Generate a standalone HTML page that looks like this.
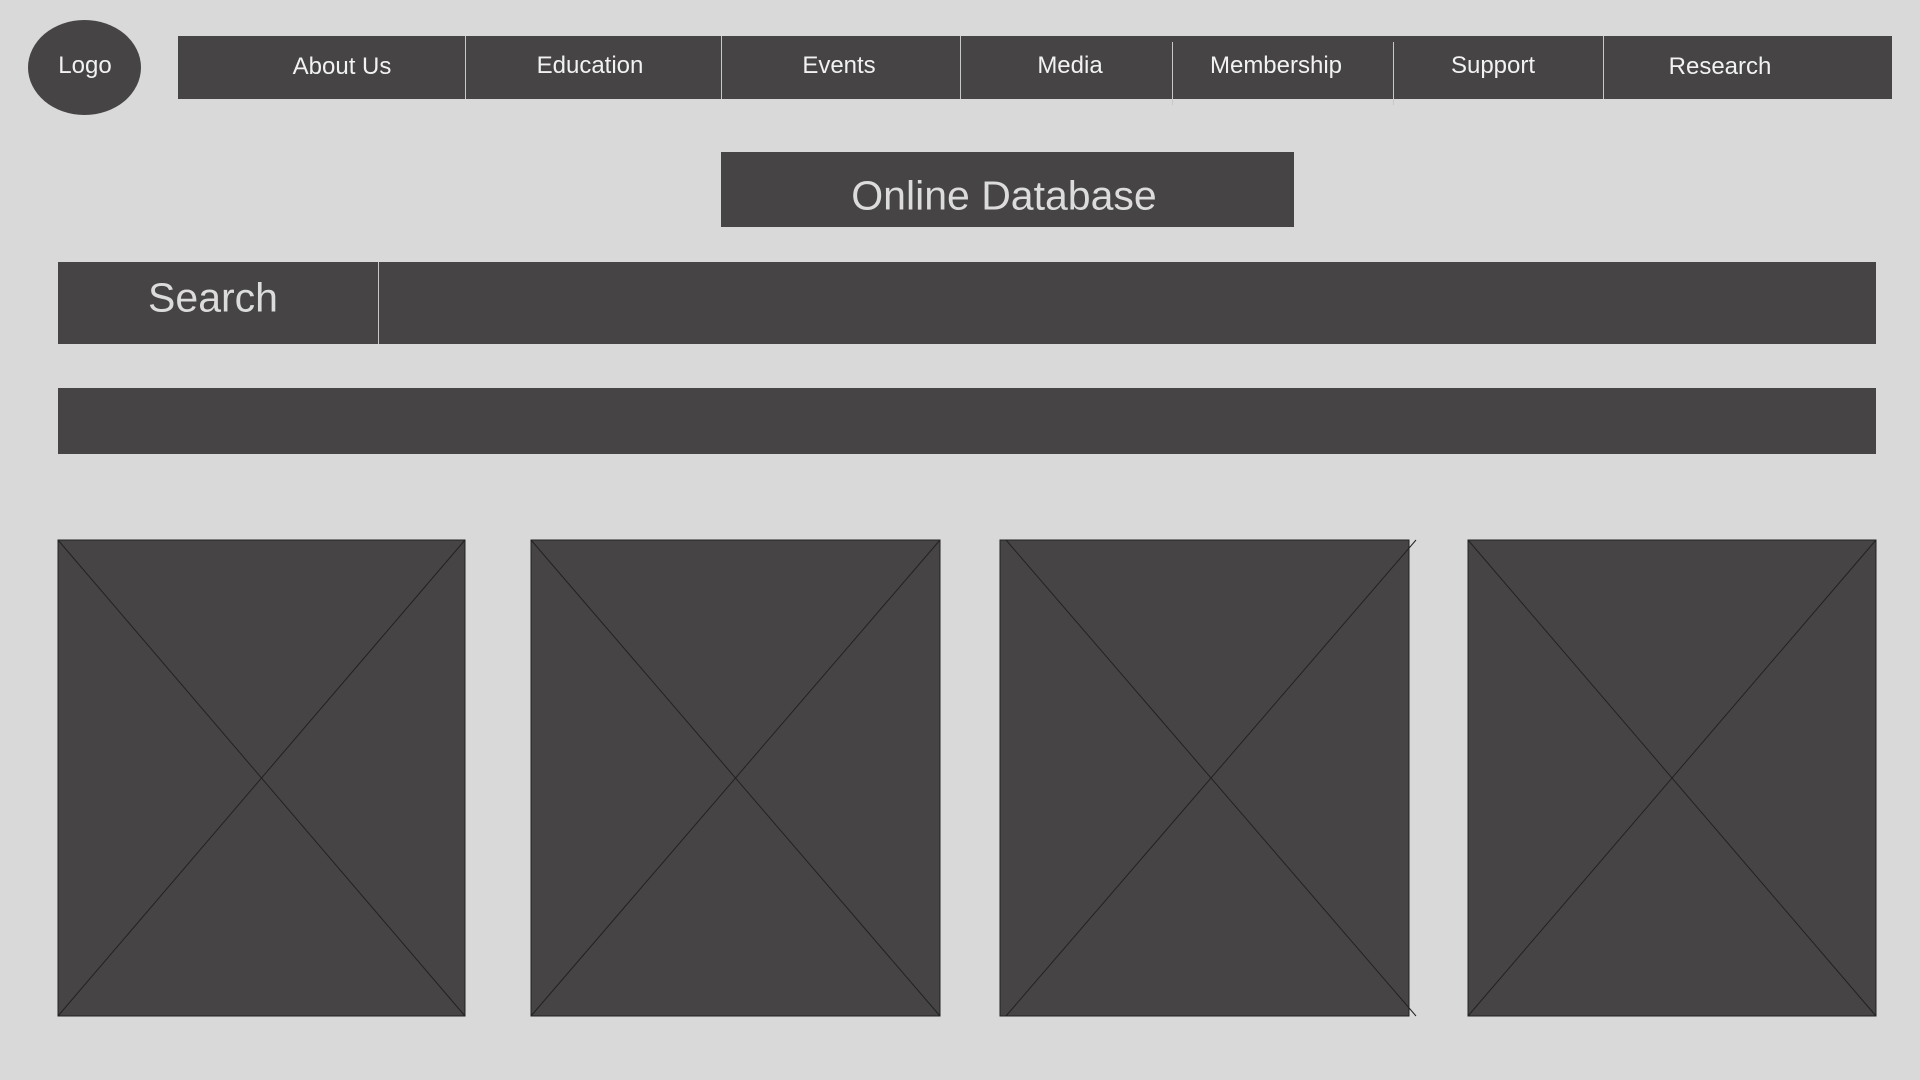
<!DOCTYPE html>
<html><head><meta charset="utf-8"><style>
body{margin:0;width:1920px;height:1080px;background:#d9d9d9;position:relative;overflow:hidden;font-family:"Liberation Sans",sans-serif}
.d{position:absolute;background:#464445}
.t{position:absolute;color:#f2f2f2;transform:translate(-50%,-50%);white-space:nowrap}
.v{position:absolute;width:1px;background:#c8c8c8}
svg{position:absolute}
</style></head><body>
<div class="d" style="left:28px;top:20px;width:113px;height:95px;border-radius:50%"></div>
<div class="t" style="left:85px;top:66px;font-size:24px">Logo</div>
<div class="d" style="left:178px;top:36px;width:1714px;height:63px"></div>
<div class="v" style="left:465px;top:36px;height:63px"></div>
<div class="v" style="left:721px;top:36px;height:63px"></div>
<div class="v" style="left:960px;top:36px;height:63px"></div>
<div class="v" style="left:1172px;top:42px;height:63px"></div>
<div class="v" style="left:1393px;top:42px;height:63px"></div>
<div class="v" style="left:1603px;top:36px;height:63px"></div>
<div class="t" style="left:342px;top:67px;font-size:24px">About Us</div>
<div class="t" style="left:590px;top:66px;font-size:24px">Education</div>
<div class="t" style="left:839px;top:66px;font-size:24px">Events</div>
<div class="t" style="left:1070px;top:66px;font-size:24px">Media</div>
<div class="t" style="left:1276px;top:66px;font-size:24px">Membership</div>
<div class="t" style="left:1493px;top:66px;font-size:24px">Support</div>
<div class="t" style="left:1720px;top:67px;font-size:24px">Research</div>
<div class="d" style="left:721px;top:152px;width:573px;height:75px"></div>
<div class="t" style="left:1004px;top:196px;font-size:41px;color:#dcdcdc">Online Database</div>
<div class="d" style="left:58px;top:262px;width:1818px;height:82px"></div>
<div class="v" style="left:378px;top:262px;height:82px"></div>
<div class="t" style="left:213px;top:298px;font-size:41px;color:#dcdcdc">Search</div>
<div class="d" style="left:58px;top:388px;width:1818px;height:66px"></div>
<svg width="1920" height="1080" style="left:0;top:0">
<g fill="#464445" stroke="#222" stroke-width="1">
<rect x="58" y="540" width="407" height="476"/><line x1="58" y1="540" x2="465" y2="1016"/><line x1="465" y1="540" x2="58" y2="1016"/>
<rect x="531" y="540" width="409" height="476"/><line x1="531" y1="540" x2="940" y2="1016"/><line x1="940" y1="540" x2="531" y2="1016"/>
<rect x="1000" y="540" width="409" height="476"/><line x1="1006" y1="540" x2="1416" y2="1016"/><line x1="1416" y1="540" x2="1006" y2="1016"/>
<rect x="1468" y="540" width="408" height="476"/><line x1="1468" y1="540" x2="1876" y2="1016"/><line x1="1876" y1="540" x2="1468" y2="1016"/>
</g></svg>
</body></html>
